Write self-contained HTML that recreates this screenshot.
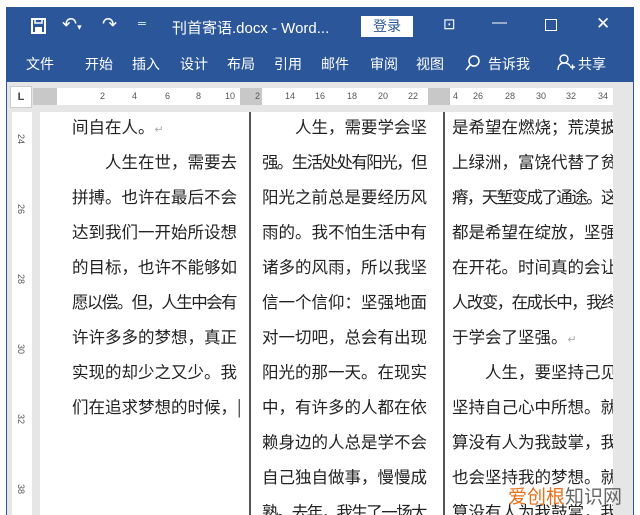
<!DOCTYPE html>
<html><head><meta charset="utf-8"><style>
*{margin:0;padding:0;box-sizing:border-box}
html,body{width:640px;height:515px;overflow:hidden}
body{background:#fff;font-family:"Liberation Sans","Noto Sans CJK SC",sans-serif;position:relative}
.frame{position:absolute;left:6px;top:7px;width:628px;height:508px;background:#2b579a}
.t{position:absolute;color:#fff;font-size:15px;white-space:nowrap}
.m{position:absolute;top:54px;color:#fff;font-size:14px;white-space:nowrap}
.work{position:absolute;left:7px;top:82px;width:626px;height:433px;background:#e6e6e6}
.ruler{position:absolute;left:33px;top:88px;width:580px;height:17px;background:#fff;font-size:9px;color:#555}
.ruler span{position:absolute;top:3px}
.g{position:absolute;top:0;height:17px;background:#c8c8c8}
.vr{position:absolute;left:12px;top:112px;width:20px;height:403px;background:#fff}
.vr span{position:absolute;left:4px;font-size:9px;color:#555;transform:rotate(90deg)}
.page{position:absolute;left:40px;top:112px;width:573px;height:403px;background:#fff}
.col{position:absolute;top:0;height:406px;overflow:hidden;white-space:nowrap;font-size:16.5px;color:#222;font-family:"Noto Sans CJK SC",sans-serif}
.col div{height:35px;line-height:35px}
.col .n{letter-spacing:-1.6px}
.sep{position:absolute;top:112px;width:1.5px;height:403px;background:#555}
</style></head><body>
<div class="frame"></div>
<svg style="position:absolute;left:30px;top:17px" width="18" height="18" viewBox="0 0 18 18"><rect x="2" y="2" width="13" height="14" fill="none" stroke="#fff" stroke-width="2"/><rect x="5" y="10" width="7" height="6" fill="#fff"/><rect x="5" y="2" width="7" height="4" fill="none" stroke="#fff" stroke-width="1.5"/></svg>
<div class="t" style="left:62px;top:14px;font-size:18px">↶<span style="font-size:9px">▾</span></div>
<div class="t" style="left:102px;top:14px;font-size:18px">↷</div>
<div class="t" style="left:138px;top:18px;font-size:11px">═</div>
<div class="t" style="left:172px;top:17px">刊首寄语.docx - Word...</div>
<div style="position:absolute;left:361px;top:16px;width:52px;height:21px;background:#fff;color:#2b579a;font-size:14px;text-align:center;line-height:21px">登录</div>
<div class="t" style="left:443px;top:15px;font-size:15px">⊡</div>
<div class="t" style="left:492px;top:14px">—</div>
<div style="position:absolute;left:545px;top:19px;width:12px;height:12px;border:1.5px solid #fff"></div>
<div class="t" style="left:596px;top:14px;font-size:17px">✕</div>
<div class="m" style="left:26px">文件</div><div class="m" style="left:85px">开始</div><div class="m" style="left:132px">插入</div><div class="m" style="left:180px">设计</div><div class="m" style="left:227px">布局</div><div class="m" style="left:274px">引用</div><div class="m" style="left:321px">邮件</div><div class="m" style="left:370px">审阅</div><div class="m" style="left:416px">视图</div>
<svg style="position:absolute;left:464px;top:54px" width="18" height="18" viewBox="0 0 18 18"><circle cx="10" cy="7" r="5" fill="none" stroke="#fff" stroke-width="1.5"/><path d="M6.5 10.5L2 16" stroke="#fff" stroke-width="1.5"/></svg><div class="m" style="left:488px">告诉我</div>
<svg style="position:absolute;left:556px;top:53px" width="20" height="20" viewBox="0 0 20 20"><circle cx="8" cy="6" r="4" fill="none" stroke="#fff" stroke-width="1.4"/><path d="M2 17c0-5 3-7 6-7s5 1 6 3M14 14h5M16.5 11.5v5" fill="none" stroke="#fff" stroke-width="1.4"/></svg><div class="m" style="left:578px">共享</div>
<div class="work"></div>
<div style="position:absolute;left:10px;top:86px;width:22px;height:22px;background:#fff;border:1px solid #ccc;font-size:11px;font-weight:bold;color:#444;text-align:center;line-height:20px">L</div>
<div class="ruler">
<div class="g" style="left:0;width:24px"></div><div class="g" style="left:207px;width:22px"></div><div class="g" style="left:395px;width:22px"></div>
<span style="left:67px">2</span><span style="left:99px">4</span><span style="left:132px">6</span><span style="left:163px">8</span><span style="left:192px">10</span><span style="left:222px">2</span><span style="left:252px">14</span><span style="left:282px">16</span><span style="left:314px">18</span><span style="left:345px">20</span><span style="left:375px">22</span><span style="left:420px">4</span><span style="left:440px">26</span><span style="left:472px">28</span><span style="left:503px">30</span><span style="left:533px">32</span><span style="left:565px">34</span>
</div>
<div class="vr"><span style="top:22px">24</span><span style="top:92px">26</span><span style="top:162px">28</span><span style="top:232px">30</span><span style="top:302px">32</span><span style="top:372px">38</span></div>
<div class="page"></div>
<div class="sep" style="left:249px"></div><div class="sep" style="left:443px"></div>
<div class="col" style="left:72px;top:109px;width:172px">
<div>间自在人。<span style="color:#aaa;font-size:11px">↵</span></div><div>　　人生在世，需要去</div><div>拼搏。也许在最后不会</div><div>达到我们一开始所设想</div><div>的目标，也许不能够如</div><div class="n">愿以偿。但，人生中会有</div><div>许许多多的梦想，真正</div><div>实现的却少之又少。我</div><div>们在追求梦想的时候，|</div></div>
<div class="col" style="left:262px;top:109px;width:172px">
<div>　　人生，需要学会坚</div><div class="n">强。生活处处有阳光，但</div><div>阳光之前总是要经历风</div><div>雨的。我不怕生活中有</div><div>诸多的风雨，所以我坚</div><div>信一个信仰：坚强地面</div><div>对一切吧，总会有出现</div><div>阳光的那一天。在现实</div><div>中，有许多的人都在依</div><div>赖身边的人总是学不会</div><div>自己独自做事，慢慢成</div><div class="n">熟。去年，我生了一场大</div></div>
<div class="col" style="left:452px;top:109px;width:161px">
<div>是希望在燃烧；荒漠披</div><div>上绿洲，富饶代替了贫</div><div class="n">瘠，天堑变成了通途。这</div><div>都是希望在绽放，坚强</div><div>在开花。时间真的会让</div><div class="n">人改变，在成长中，我终</div><div>于学会了坚强。<span style="color:#aaa;font-size:11px">↵</span></div><div>　　人生，要坚持己见</div><div>坚持自己心中所想。就</div><div>算没有人为我鼓掌，我</div><div>也会坚持我的梦想。就</div><div>算没有人为我鼓掌，我</div></div>
<div style="position:absolute;left:508px;top:482px;font-size:19px;white-space:nowrap;font-family:'Noto Sans CJK SC',sans-serif"><span style="color:#e8701a">爱创根</span><span style="color:#666">知识网</span></div>
</body></html>
